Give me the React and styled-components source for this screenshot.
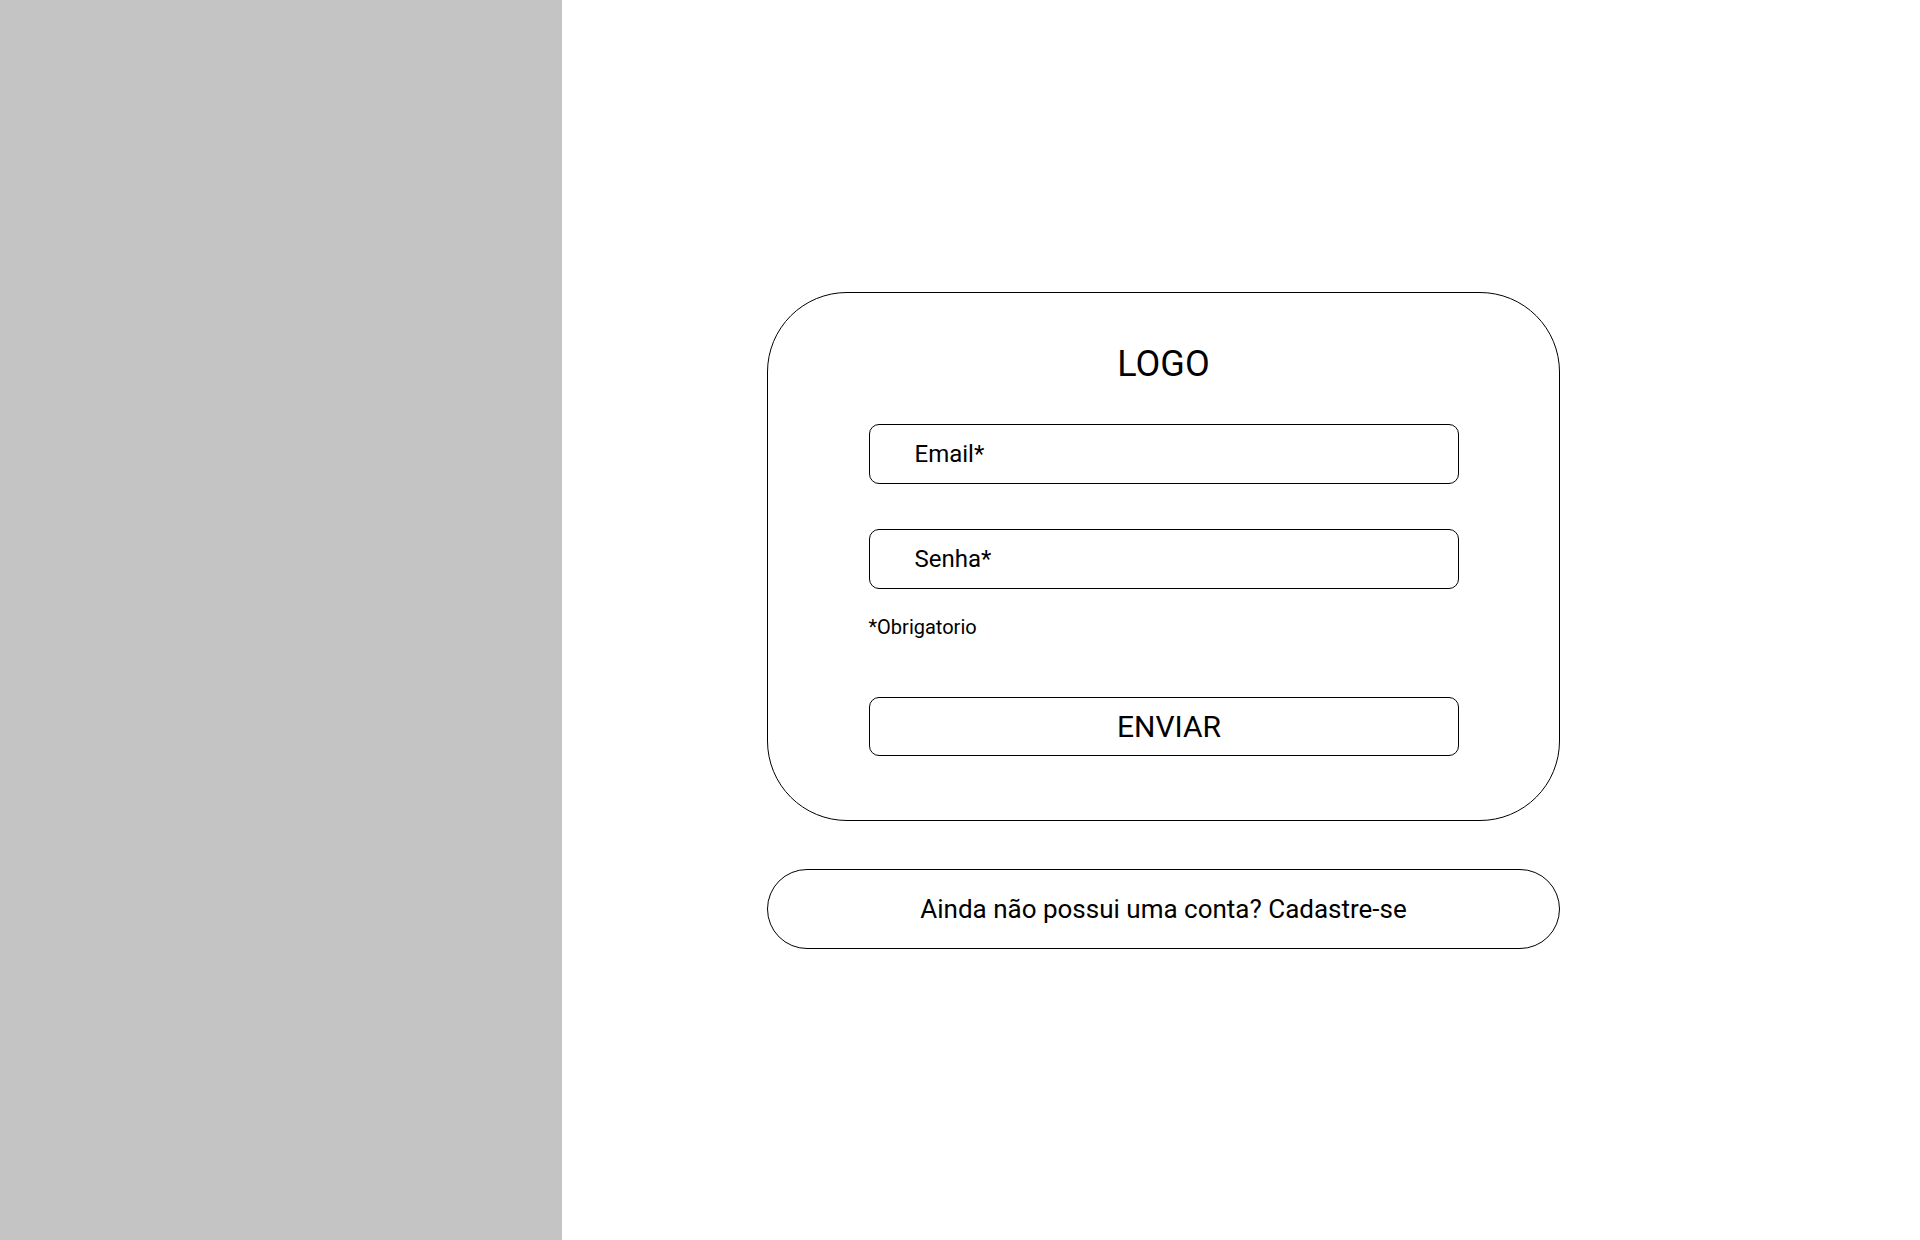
import styled, { createGlobalStyle } from 'styled-components';

const GlobalStyle = createGlobalStyle`
  * {
    box-sizing: border-box;
  }

  body {
    margin: 0;
    font-family: Roboto, 'Liberation Sans', Arial, sans-serif;
    color: #000;
    background: #fff;
  }
`;

const Page = styled.div`
  display: flex;
  min-height: 100vh;
`;

const SidePanel = styled.aside`
  width: 562px;
  flex-shrink: 0;
  background-color: #c4c4c4;
`;

const Main = styled.main`
  flex: 1;
  display: flex;
  flex-direction: column;
  justify-content: center;
  padding-left: 205px;
`;

const LoginCard = styled.div`
  width: 793px;
  border: 1px solid #000;
  border-radius: 80px;
  padding: 50px 0 64px;
  display: flex;
  flex-direction: column;
  align-items: center;
`;

const Logo = styled.h1`
  margin: 0;
  font-size: 36px;
  font-weight: 400;
  line-height: 42px;
`;

const Form = styled.form`
  width: 590px;
  display: flex;
  flex-direction: column;
  margin-top: 39px;
`;

const Field = styled.input`
  width: 100%;
  height: 60px;
  border: 1px solid #000;
  border-radius: 10px;
  padding: 0 0 0 45px;
  margin-bottom: ${(props) => props.$spacing || 0}px;
  font-family: inherit;
  font-size: 24px;
  color: #000;
  background: #fff;
  outline: none;

  &::placeholder {
    color: #000;
    opacity: 1;
  }
`;

const Hint = styled.span`
  font-size: 20px;
  line-height: 24px;
  margin-top: 26px;
`;

const SubmitButton = styled.button`
  width: 100%;
  height: 59px;
  margin-top: 58px;
  border: 1px solid #000;
  border-radius: 10px;
  padding: 0 0 0 11px;
  background: #fff;
  font-family: inherit;
  font-size: 30px;
  color: #000;
  cursor: pointer;
`;

const SignupBar = styled.a`
  width: 793px;
  height: 80px;
  margin-top: 48px;
  border: 1px solid #000;
  border-radius: 40px;
  display: flex;
  align-items: center;
  justify-content: center;
  font-size: 26px;
  color: #000;
  text-decoration: none;
  cursor: pointer;
`;

const App = () => {
  const onSubmit = (e) => {
    e.preventDefault();
  };

  return (
    <>
      <GlobalStyle />
      <Page>
        <SidePanel />
        <Main>
          <LoginCard>
            <Logo>LOGO</Logo>
            <Form onSubmit={onSubmit}>
              <Field type="email" placeholder="Email*" $spacing={45} />
              <Field type="password" placeholder="Senha*" />
              <Hint>*Obrigatorio</Hint>
              <SubmitButton type="submit">ENVIAR</SubmitButton>
            </Form>
          </LoginCard>
          <SignupBar href="#">Ainda não possui uma conta? Cadastre-se</SignupBar>
        </Main>
      </Page>
    </>
  );
};

export default App;
